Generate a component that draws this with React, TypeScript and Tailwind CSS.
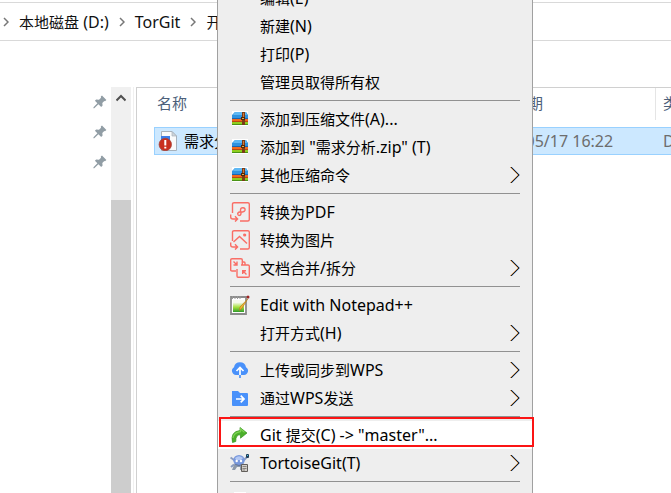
import type { ReactNode } from 'react';
import clsx from 'clsx';

interface MenuEntry {
  label: string;
  icon?: ReactNode;
  submenu?: boolean;
  active?: boolean;
}

// Chinese runs are set one pixel smaller than the Latin text around them
function MixedText({ text }: { text: string }) {
  return (
    <>
      {text.split(/([\u4e00-\u9fff]+)/).map((part, index) =>
        index % 2 === 1 ? (
          <span key={index} className="text-[15px]">
            {part}
          </span>
        ) : (
          part
        ),
      )}
    </>
  );
}

function ArchiveIcon() {
  return (
    <svg width="18" height="18" viewBox="0 0 18 18">
      <rect x="1" y="1" width="16" height="15" fill="#fff" />
      <path d="M1 5 4 2H15L17 5V9H1Z" fill="#2f93e0" />
      <path d="M2 5 4 2H15L16 5Z" fill="#5fb8f3" />
      <path d="M1 8H17V9H1Z" fill="#1d63ae" />
      <path d="M1 9H17V12H1Z" fill="#f26a1b" />
      <path d="M1 11H17V12H1Z" fill="#b9480f" />
      <path d="M1 12H17V15H1Z" fill="#8fce1e" />
      <path d="M1 14H17V15H1Z" fill="#4a9416" />
      <path d="M11 2H14V15H11Z" fill="#7b3c17" />
      <path d="M12 3H13V7H12Z" fill="#d1773a" />
      <path d="M10 7H14V10H10Z" fill="#542609" />
      <path d="M11 8H13V9H11Z" fill="#e0b24d" />
    </svg>
  );
}

function ToPdfIcon() {
  return (
    <svg width="20" height="20" viewBox="0 0 20 20" fill="none" stroke="#f96e66" strokeWidth="1.4">
      <path d="M2.5 11V2Q2.5 0.7 4 0.7H17.8Q19.3 0.7 19.3 2V17.5Q19.3 19 17.8 19H10" />
      <path d="M0.7 12.5V15Q0.7 17 3 17H7M5 14.2 7.6 17 5 19.6" />
      <path d="M10.5 9.5V8.5Q10.5 5.5 13 5.7 15.5 6 15 8.2 14.6 9.5 12.5 10H9.8Q7.6 10.3 7.7 12 8 13.7 9.7 13.4 11.3 13 11 10" />
    </svg>
  );
}

function ToImageIcon() {
  return (
    <svg width="20" height="20" viewBox="0 0 20 20" fill="none" stroke="#f96e66" strokeWidth="1.4">
      <path d="M2.5 11V2Q2.5 0.7 4 0.7H17.8Q19.3 0.7 19.3 2V17.5Q19.3 19 17.8 19H10" />
      <path d="M0.7 12.5V15Q0.7 17 3 17H7M5 14.2 7.6 17 5 19.6" />
      <path d="M3.5 12 9.5 6.5 17 13.5" />
      <circle cx="14.7" cy="5" r="0.9" fill="#f96e66" />
    </svg>
  );
}

function MergeIcon() {
  return (
    <svg width="20" height="20" viewBox="0 0 20 20" fill="none" stroke="#f96e66" strokeWidth="1.4">
      <path d="M6 13H2Q0.7 13 0.7 12V2Q0.7 0.7 2 0.7H11Q12.3 0.7 12.3 2V7" />
      <path d="M12.3 4H14Q15 4 15 5V7" />
      <path d="M11 7H18Q19.3 7 19.3 8V18Q19.3 19.3 18 19.3H8Q7 19.3 7 18V11" />
      <path d="M3.5 3.5 6.5 6.5M7 3.5V7H3.5" />
      <path d="M16.5 16.5 13 13M12.7 16V12.7H16" />
    </svg>
  );
}

function NotepadIcon() {
  return (
    <svg width="20" height="20" viewBox="0 0 20 20">
      <defs>
        <linearGradient id="note" x1="0" y1="0" x2="0" y2="1">
          <stop offset="0.2" stopColor="#f6f9ee" />
          <stop offset="0.6" stopColor="#a5e03c" />
          <stop offset="1" stopColor="#2f9a2c" />
        </linearGradient>
      </defs>
      <path d="M1 2H16V19H1Z" fill="#fff" stroke="#8b8b8b" strokeWidth="1.8" />
      <path d="M3 5H14V17H3Z" fill="url(#note)" />
      <path d="M2.5 1V4M5 1V4M7.5 1V4M10 1V4" stroke="#999" />
      <path d="M17.8 3.8 12 13.2 9.5 15.5 10 12Z" fill="#f3b530" stroke="#b07d22" strokeWidth="0.7" />
      <circle cx="18" cy="2" r="1.5" fill="#9c2525" />
    </svg>
  );
}

function CloudIcon() {
  return (
    <svg width="18" height="18" viewBox="0 0 18 18">
      <path d="M5 14A4.2 4.2 0 0 1 3 6.2 6.1 6.1 0 0 1 15 6.2 4.2 4.2 0 0 1 13 14Z" fill="#4991fa" />
      <path d="M9 14V7M5.5 10 9 6.5 12.5 10" fill="none" stroke="#fff" strokeWidth="1.7" />
      <path d="M9 14V17" stroke="#4991fa" strokeWidth="1.7" />
    </svg>
  );
}

function SendFolderIcon() {
  return (
    <svg width="18" height="18" viewBox="0 0 18 18">
      <path d="M1 2H7L9 4H16Q17 4 17 5V16Q17 17 16 17H2Q1 17 1 16Z" fill="#4991fa" />
      <path d="M5 10H13M9.7 6.7 13 10 9.7 13.3" fill="none" stroke="#fff" strokeWidth="1.7" />
    </svg>
  );
}

function CommitIcon() {
  return (
    <svg width="18" height="18" viewBox="0 0 18 18">
      <path
        d="M1.5 16.5Q-1 5.5 9 4.5V1.5L16 7 9.5 12.2V8.8Q4.5 8.6 4.8 15.5Z"
        fill="#4caf2b"
        stroke="#369321"
        strokeWidth="0.7"
      />
      <path d="M2 12Q2.5 6.5 9.6 5.6V3L13.5 6.3" fill="none" stroke="#7ed454" strokeWidth="1.1" />
    </svg>
  );
}

function TortoiseIcon() {
  return (
    <svg width="20" height="20" viewBox="0 0 20 20">
      <path d="M0.5 4.5 4 7M1 14 4 11.5M14 7 17 4" stroke="#8a9cc0" strokeWidth="2" />
      <path d="M4 12 2 17H5L7 14H10V17H12V12Z" fill="#8d99aa" />
      <ellipse cx="9" cy="7.2" rx="5.8" ry="5.3" fill="#7898dc" />
      <path d="M5 5Q9 1.5 13 5L11 7H6Z" fill="#b3c8f4" />
      <circle cx="6.7" cy="8" r="1.2" fill="#fff" />
      <circle cx="11" cy="8" r="1.2" fill="#fff" />
      <path d="M4 11Q9 14 14 11" fill="none" stroke="#52658d" strokeWidth="0.8" />
      <rect x="16" y="1" width="3" height="4" rx="1" fill="#1d3c59" />
      <path d="M17 2H18V3H17Z" fill="#4cc6e4" />
      <path d="M11.5 11.5H17.5V18.5H11.5Z" fill="#d3d0cb" stroke="#625e5a" />
      <path d="M12.5 13.5H16.5M12.5 15.5H16.5M12.5 17H15" stroke="#77716c" strokeWidth="0.8" />
    </svg>
  );
}

function BlankIcon() {
  return (
    <svg width="18" height="18" viewBox="0 0 18 18">
      <path d="M3 1H15V17H3Z" fill="#fff" />
    </svg>
  );
}

function DocumentIcon() {
  return (
    <svg width="20" height="20" viewBox="0 0 20 20">
      <path d="M3.5 0.5H14L18.5 5V19.5H3.5Z" fill="#f9fafb" stroke="#a6b1bb" />
      <path d="M14 0.5V5H18.5Z" fill="#cfd5da" stroke="#a6b1bb" strokeWidth="0.7" />
      <path d="M3 5H12V12H3Z" fill="#3b7de8" />
      <circle cx="7.3" cy="13.5" r="6.2" fill="#c9301f" stroke="#a5433b" strokeWidth="0.8" />
      <path d="M6.3 9H8.3V14.5H6.3ZM6.3 15.7H8.3V17.5H6.3Z" fill="#fff" />
    </svg>
  );
}

function PinIcon() {
  return (
    <svg width="14" height="14" viewBox="0 0 14 14" fill="#919da5">
      <path d="M9 0.6 13.4 5 12 6.2 11.3 5.9 9.3 8 9.6 10.6 8.2 12 5.4 9.2 1.3 13.2 0.4 13.2 0.5 12.3 4.4 8.2 1.9 5.8 3.2 4.5 6 4.8 8 2.7 7.8 1.6Z" />
    </svg>
  );
}

function CrumbArrow() {
  return (
    <svg width="6" height="10" viewBox="0 0 6 10" fill="none" stroke="#777" strokeWidth="1.5">
      <path d="M1 1 5 5 1 9" />
    </svg>
  );
}

function SubmenuArrow() {
  return (
    <svg width="10" height="18" viewBox="0 0 10 18" fill="none" strokeWidth="1">
      <path d="M0.2 1 8.2 9 0.2 17" stroke="#e9a35c" />
      <path d="M1.5 1 9.5 9 1.5 17" stroke="#4a86cf" />
      <path d="M0.9 1 8.9 9 0.9 17" stroke="#111" />
    </svg>
  );
}

const menuGroups: MenuEntry[][] = [
  [{ label: '编辑(E)' }, { label: '新建(N)' }, { label: '打印(P)' }, { label: '管理员取得所有权' }],
  [
    { label: '添加到压缩文件(A)...', icon: <ArchiveIcon /> },
    { label: '添加到 "需求分析.zip" (T)', icon: <ArchiveIcon /> },
    { label: '其他压缩命令', icon: <ArchiveIcon />, submenu: true },
  ],
  [
    { label: '转换为PDF', icon: <ToPdfIcon /> },
    { label: '转换为图片', icon: <ToImageIcon /> },
    { label: '文档合并/拆分', icon: <MergeIcon />, submenu: true },
  ],
  [
    { label: 'Edit with Notepad++', icon: <NotepadIcon /> },
    { label: '打开方式(H)', submenu: true },
  ],
  [
    { label: '上传或同步到WPS', icon: <CloudIcon />, submenu: true },
    { label: '通过WPS发送', icon: <SendFolderIcon />, submenu: true },
  ],
  [
    { label: 'Git 提交(C) -> "master"...', icon: <CommitIcon />, active: true },
    { label: 'TortoiseGit(T)', icon: <TortoiseIcon />, submenu: true },
  ],
  [{ label: '', icon: <BlankIcon /> }],
];

function MenuItem({ label, icon, submenu, active }: MenuEntry) {
  return (
    <li className="relative">
      <button
        type="button"
        aria-label={label || 'More'}
        className={clsx('flex h-7 w-full items-center px-3 text-left', active && 'bg-white')}
      >
        <span className="flex w-5 flex-none justify-center">{icon}</span>
        <span className="ml-[10px] flex-1 whitespace-nowrap">
          <MixedText text={label} />
        </span>
        {submenu && <SubmenuArrow />}
      </button>
      {/* Red frame round the highlighted command */}
      {active && <div className="absolute -top-1 -right-[2px] bottom-[2px] left-px border-2 border-[#fb1414]" />}
    </li>
  );
}

function ContextMenu() {
  return (
    <nav className="absolute -top-4 left-[217px] w-[316px] border-x border-[#a0a0a0] bg-[#eeeeee] text-black">
      {menuGroups.map((group, index) => (
        <div key={index}>
          {index > 0 && (
            <div className="px-3 py-1">
              <div className="h-px bg-[#919191]" />
            </div>
          )}
          <ul>
            {group.map((entry) => (
              <MenuItem key={entry.label} {...entry} />
            ))}
          </ul>
        </div>
      ))}
    </nav>
  );
}

function Breadcrumb() {
  return (
    <header className="mt-[2px] flex h-[39px] flex-none items-center gap-[10px] border-y border-[#d9d9d9] pl-[3px] whitespace-nowrap text-[#111]">
      <CrumbArrow />
      <a href="#drive">
        <MixedText text="本地磁盘 (D:)" />
      </a>
      <CrumbArrow />
      <a href="#torgit">TorGit</a>
      <CrumbArrow />
      <a href="#dev">
        <MixedText text="开发" />
      </a>
    </header>
  );
}

function Sidebar() {
  return (
    <aside className="flex w-[133px] flex-none justify-end">
      <div className="flex flex-col gap-4 pt-2 pr-1">
        <PinIcon />
        <PinIcon />
        <PinIcon />
      </div>
      <div className="mr-[2px] flex w-5 flex-col bg-[#f0f0f0]">
        <div className="flex h-[113px] flex-none justify-center pt-[7px]">
          <svg width="10" height="8" viewBox="0 0 10 8" fill="none" stroke="#505050" strokeWidth="2">
            <path d="M0.5 6.5 5 2 9.5 6.5" />
          </svg>
        </div>
        <div className="flex-1 bg-[#cdcdcd]" />
      </div>
    </aside>
  );
}

function FileList() {
  return (
    <main className="min-w-0 flex-1 overflow-hidden border-t border-l border-[#d0d0d0]">
      <table className="w-full min-w-[600px] table-fixed border-separate border-spacing-0 text-left whitespace-nowrap">
        <thead>
          <tr className="h-8 text-[15px] text-[#4c607a]">
            <th className="w-[17px]" />
            <th className="w-[329px] pb-[2px] pl-[3px] font-normal">名称</th>
            <th className="w-[173px] border-r border-[#e5e5e5] pb-[2px] font-normal">修改日期</th>
            <th className="pb-[2px] pl-[7px] font-normal">类型</th>
          </tr>
        </thead>
        <tbody>
          <tr className="h-[7px]" />
          <tr className="h-7 text-[#6d6d6d]">
            <td />
            <td className="border-y border-l border-[#99d1ff] bg-[#cce8ff] text-black">
              <div className="flex items-center gap-[6px] pl-[3px]">
                <DocumentIcon />
                <span>
                  <MixedText text="需求分析.docx" />
                </span>
              </div>
            </td>
            <td className="border-y border-[#99d1ff] bg-[#cce8ff]">2021/05/17 16:22</td>
            <td className="border-y border-[#99d1ff] bg-[#cce8ff] pl-[7px]">
              <MixedText text="DOCX 文档" />
            </td>
          </tr>
        </tbody>
      </table>
    </main>
  );
}

export default function App() {
  return (
    <div className="relative flex h-screen flex-col overflow-hidden bg-white font-['Noto_Sans','Noto_Sans_CJK_SC',sans-serif] text-base leading-5">
      <Breadcrumb />
      <div className="mt-[46px] flex min-h-0 flex-1">
        <Sidebar />
        <div className="w-[3px] flex-none border-l border-[#f0f0f0]" />
        <FileList />
      </div>
      <ContextMenu />
    </div>
  );
}
